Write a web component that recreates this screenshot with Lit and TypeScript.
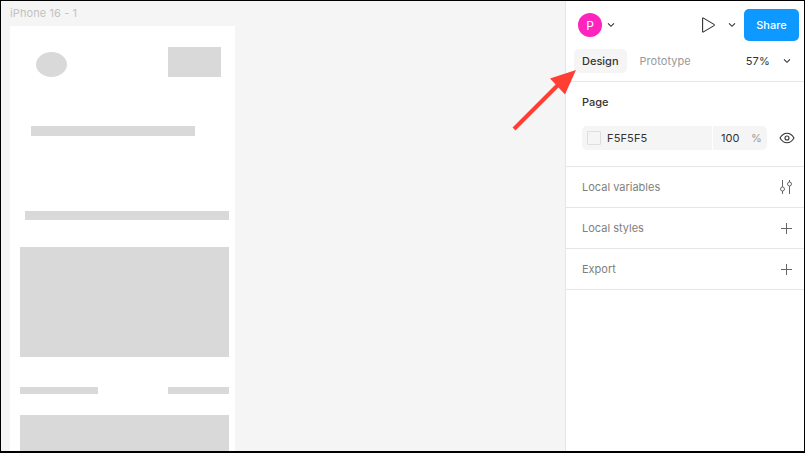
import { LitElement, html, css, svg } from "lit";
import { customElement } from "lit/decorators.js";

const chevron = svg`<svg class="chev" width="8" height="6" viewBox="0 0 8 6"><path d="M1 1.3 L4 4.3 L7 1.3" fill="none" stroke="#333" stroke-width="1.1"/></svg>`;

@customElement("app-root")
export class AppRoot extends LitElement {
  static styles = css`
    :host {
      display: block;
      width: 805px;
      height: 453px;
      box-sizing: border-box;
      border: 1px solid #000;
      border-bottom-width: 2px;
      overflow: hidden;
      position: relative;
      font-family: Inter, "Liberation Sans", sans-serif;
      background: #f5f5f5;
    }
    .root { display: flex; height: 100%; }
    .canvas { width: 564px; flex: none; padding: 5px 0 0 9px; box-sizing: border-box; overflow: hidden; }
    .frame-title { font-size: 11px; line-height: 13px; color: #c2c2c2; height: 19px; white-space: nowrap; margin-top: 1px; letter-spacing: .1px; }
    .frame { width: 225px; height: 500px; background: #fff; padding: 21px 6px 0 10px; box-sizing: border-box; }
    .b { background: #d9d9d9; }
    .hdr { display: flex; align-items: flex-end; justify-content: space-between; height: 30px; padding: 0 8px 0 16px; }
    .oval { width: 31px; height: 25px; border-radius: 50%; }
    .logo { width: 53px; height: 30px; }
    .bar1 { width: 164px; height: 10px; margin: 49px 0 0 11px; }
    .bar2 { width: 204px; height: 9px; margin: 75px 0 0 5px; }
    .big1 { width: 209px; height: 110px; margin-top: 27px; }
    .pair { display: flex; justify-content: space-between; width: 209px; margin-top: 30px; }
    .p1 { width: 78px; height: 7px; }
    .p2 { width: 61px; height: 7px; }
    .big2 { width: 209px; height: 60px; margin-top: 21px; }

    .panel { flex: 1; min-width: 0; background: #fff; border-left: 1px solid #e6e6e6; box-sizing: border-box; font-size: 11px; color: #333; }
    .top { height: 48px; display: flex; align-items: center; padding: 0 5px 0 12px; box-sizing: border-box; }
    .avatar { width: 24px; height: 24px; border-radius: 50%; background: #ff24bd; color: #fff; font-size: 12px; display: flex; align-items: center; justify-content: center; }
    .top .chev { margin-left: 5px; }
    .top .chev.second { margin-left: 6px; }
    .spacer { flex: 1; }
    .play { display: block; }
    .gap6 { width: 6px; }
    .share { width: 55px; height: 32px; border-radius: 5px; background: #0d99ff; color: #fff; font-size: 11px; font-weight: 500; display: flex; align-items: center; justify-content: center; margin-left: 8px; }
    .tabs { height: 32px; display: flex; align-items: flex-start; border-bottom: 1px solid #e6e6e6; padding-left: 8px; }
    .tab { height: 24px; padding: 0 8px; border-radius: 5px; display: flex; align-items: center; font-weight: 500; font-size: 11px; }
    .tab.on { background: #f5f5f5; color: #333; }
    .tab.off { color: #999; margin-left: 5px; font-weight: 400; letter-spacing: .05px; }
    .zoom { margin-left: auto; display: flex; align-items: center; height: 24px; gap: 13px; padding-right: 13px; letter-spacing: .2px; }
    .page { border-bottom: 1px solid #e6e6e6; padding: 14px 0 0 16px; box-sizing: border-box; height: 85px; }
    .page-title { font-weight: 500; line-height: 13px; color: #333; }
    .fill-row { display: flex; align-items: center; margin-top: 17px; }
    .fill { width: 185px; height: 24px; background: #f5f5f5; border-radius: 5px; display: flex; align-items: center; overflow: hidden; }
    .swatch { width: 12px; height: 12px; margin-left: 5px; border: 1px solid #dedede; background: #f5f5f5; border-radius: 1px; flex: none; }
    .hex { margin-left: 6px; width: 105px; letter-spacing: .15px; }
    .sep { width: 1px; height: 24px; background: #fff; }
    .opa { margin-left: 8px; width: 26px; letter-spacing: .1px; }
    .pct { color: #999; margin-left: 4px; }
    .eye { margin-left: 12px; display: block; }
    .row { height: 41px; border-bottom: 1px solid #e6e6e6; box-sizing: border-box; display: flex; align-items: center; justify-content: space-between; padding: 0 12px 0 16px; color: #808080; }
    .row svg { display: block; }
    .sliders { margin-right: -1px; }
    .arrow { position: absolute; left: 499px; top: 59px; pointer-events: none; }
  `;

  render() {
    const plus = svg`<svg width="11" height="11" viewBox="0 0 11 11"><path d="M5.5 0v11M0 5.5h11" stroke="#666" stroke-width="1" fill="none"/></svg>`;
    return html`
      <div class="root">
        <div class="canvas">
          <div class="frame-title">iPhone 16 - 1</div>
          <div class="frame">
            <div class="hdr"><div class="b oval"></div><div class="b logo"></div></div>
            <div class="b bar1"></div>
            <div class="b bar2"></div>
            <div class="b big1"></div>
            <div class="pair"><div class="b p1"></div><div class="b p2"></div></div>
            <div class="b big2"></div>
          </div>
        </div>
        <div class="panel">
          <div class="top">
            <div class="avatar">P</div>
            ${chevron}
            <div class="spacer"></div>
            <svg class="play" width="16" height="18" viewBox="0 0 16 18"><path d="M2.6 2.6 V15.4 Q2.6 16.4 3.5 15.9 L14 9.6 Q14.6 9 14 8.4 L3.5 2.1 Q2.6 1.6 2.6 2.6 Z" fill="none" stroke="#333" stroke-width="1.1" stroke-linejoin="round"/></svg>
            <span class="gap6"></span>
            <svg class="chev second" width="8" height="6" viewBox="0 0 8 6"><path d="M1 1.3 L4 4.3 L7 1.3" fill="none" stroke="#333" stroke-width="1.1"/></svg>
            <div class="share">Share</div>
          </div>
          <div class="tabs">
            <div class="tab on">Design</div>
            <div class="tab off">Prototype</div>
            <div class="zoom"><span>57%</span>${chevron}</div>
          </div>
          <div class="page">
            <div class="page-title">Page</div>
            <div class="fill-row">
              <div class="fill">
                <div class="swatch"></div>
                <div class="hex">F5F5F5</div>
                <div class="sep"></div>
                <div class="opa">100</div>
                <div class="pct">%</div>
              </div>
              <svg class="eye" width="16" height="12" viewBox="0 0 16 12"><path d="M1 6 C3 2.6 5.3 1.2 8 1.2 S13 2.6 15 6 C13 9.4 10.7 10.8 8 10.8 S3 9.4 1 6 Z" fill="none" stroke="#333" stroke-width="1.1"/><circle cx="8" cy="6" r="2" fill="none" stroke="#333" stroke-width="1.1"/></svg>
            </div>
          </div>
          <div class="row"><span>Local variables</span>
            <svg class="sliders" width="13" height="14" viewBox="0 0 13 14"><g fill="none" stroke="#666" stroke-width="1"><path d="M2.5 0v7M2.5 11v3M9.5 0v2M9.5 6v8"/><circle cx="2.5" cy="9" r="2"/><circle cx="9.5" cy="4" r="2"/></g></svg>
          </div>
          <div class="row"><span>Local styles</span>${plus}</div>
          <div class="row"><span>Export</span>${plus}</div>
        </div>
        <svg class="arrow" width="80" height="80" viewBox="0 0 80 80">
          <path d="M14 69 L58 25" stroke="#ff3f33" stroke-width="4" fill="none"/>
          <path d="M76 10 L50 18.5 L65 34.5 Z" fill="#ff3f33"/>
        </svg>
      </div>
    `;
  }
}
